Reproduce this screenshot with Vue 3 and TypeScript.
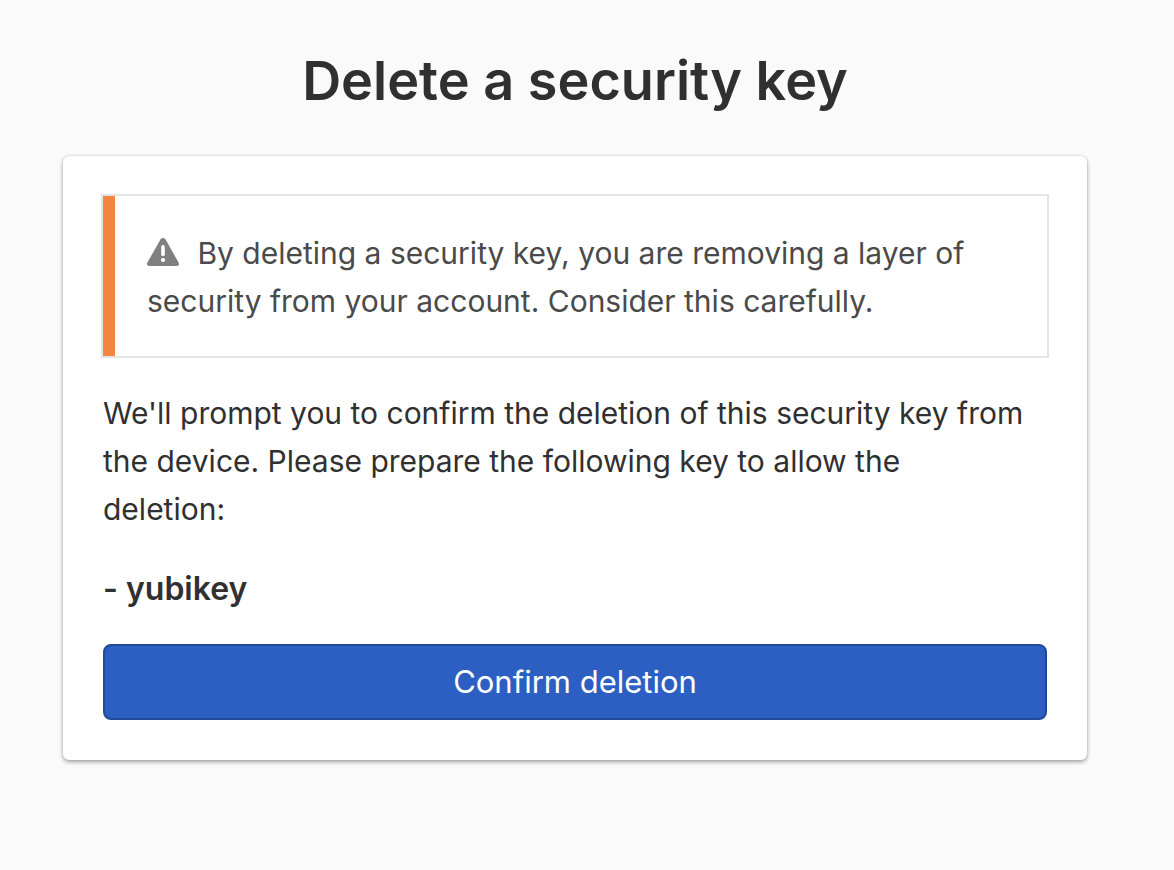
<script setup lang="ts">
import { ref } from 'vue'

const keyName = ref<string>('yubikey')
</script>

<template>
  <main class="page">
    <h1 class="title">Delete a security key</h1>
    <section class="card">
      <div class="notice">
        <svg class="icon" viewBox="0 0 32 28" aria-hidden="true">
          <path fill="#808080" d="M13.4 1.5Q16-1.4 18.6 1.5L31.6 24.6Q32.8 28 29.6 28H2.4Q-.8 28 .4 24.6Z" />
          <path fill="none" stroke="#fff" stroke-width="3.6" stroke-linecap="round" d="M16 8.8V16.4" />
          <circle cx="16" cy="22" r="2.1" fill="#fff" />
        </svg>
        By deleting a security key, you are removing a layer of security from your account. Consider this carefully.
      </div>
      <p class="text">We'll prompt you to confirm the deletion of this security key from the device. Please prepare the following key to allow the<br>deletion:</p>
      <p class="text key">- {{ keyName }}</p>
      <button class="confirm" type="button">Confirm deletion</button>
    </section>
  </main>
</template>

<style>
body {
  margin: 0;
  background: #fafafa;
}
</style>

<style scoped>
.page {
  box-sizing: border-box;
  padding: 41px 87px 40px 63px;
  color: #303030;
  font-family: Inter, "Liberation Sans", sans-serif;
}
.title {
  margin: 0 0 35px;
  font-size: 54px;
  line-height: 80px;
  font-weight: 600;
  text-align: center;
}
.card {
  padding: 38px;
  border-radius: 6px;
  background: #fff;
  box-shadow: 0 2px 4px rgba(0, 0, 0, 0.35), 0 0 2px rgba(0, 0, 0, 0.15);
}
.notice {
  position: relative;
  padding: 33px 44px 31px;
  border: 2px solid #e4e4e4;
  color: #4a4a4a;
  font-size: 30px;
  line-height: 48px;
}
.notice::before {
  content: "";
  position: absolute;
  inset: 0 auto 0 0;
  width: 12px;
  background: #f28540;
}
.icon {
  width: 32px;
  height: 28px;
  margin-right: 10px;
  vertical-align: -2px;
}
.text {
  margin: 31px 2px;
  font-size: 30px;
  line-height: 48px;
}
.key {
  margin-top: 32px;
  margin-bottom: 31px;
  font-size: 32px;
  font-weight: 600;
}
.confirm {
  display: block;
  width: calc(100% - 4px);
  margin: 0 2px 2px;
  padding: 12px;
  border: 2px solid #204a94;
  border-radius: 8px;
  background: #2c5fc1;
  color: #fff;
  font: inherit;
  font-size: 31px;
  line-height: 48px;
}
</style>
